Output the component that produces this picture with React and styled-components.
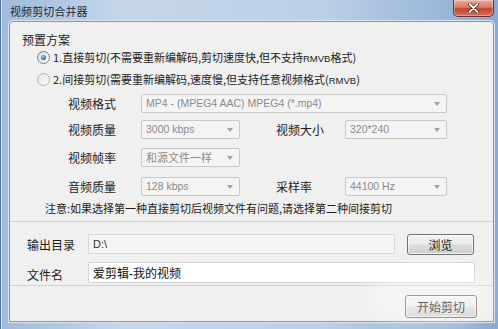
import React from "react";
import styled, { createGlobalStyle } from "styled-components";

const GlobalStyle = createGlobalStyle`
  html, body { margin: 0; padding: 0; }
  body {
    width: 498px;
    height: 329px;
    overflow: hidden;
    background: #fff;
    font-family: "Noto Sans CJK SC", "Noto Sans", sans-serif;
  }
`;

const Window = styled.div`
  position: relative;
  width: 498px;
  height: 329px;
  box-sizing: border-box;
  display: flex;
  flex-direction: column;
  background: linear-gradient(to right, #9fbadb 0%, #c6d7ea 25%, #bccfe6 65%, #8aabd4 100%);
  box-shadow: inset 1px 0 0 #4d74a6, inset 2px 0 0 #d9e6f4;
  overflow: hidden;
`;

const TitleBar = styled.div`
  height: 21px;
  display: flex;
  align-items: flex-start;
  justify-content: space-between;
  padding: 0 4px 0 10px;
`;

const Title = styled.span`
  margin-top: 3px;
  font-size: 11px;
  line-height: 16px;
  color: #1c2b3c;
  letter-spacing: 0.1px;
`;

const CloseButton = styled.div`
  width: 41px;
  height: 17px;
  box-sizing: border-box;
  display: flex;
  align-items: center;
  justify-content: center;
  border: 1px solid #6f3128;
  border-top: none;
  border-radius: 0 0 5px 5px;
  background: linear-gradient(to bottom, #e9a99c 0%, #d97a66 45%, #c2432c 55%, #d7705a 100%);
  box-shadow: inset 0 0 0 1px rgba(255, 255, 255, 0.35);
`;

const Body = styled.div`
  flex: 1;
  display: flex;
  padding: 0 4px 7px 9px;
`;

const Client = styled.div`
  flex: 1;
  display: flex;
  flex-direction: column;
  background: #f0f0f0;
  border: 1px solid #7e96b4;
  border-radius: 4px 4px 0 0;
  box-shadow: 0 0 0 1px #dbe6f2;
`;

const Section = styled.div`
  display: flex;
  flex-direction: column;
  padding: ${(p) => p.$pad};
  border-bottom: ${(p) => (p.$line ? "1px solid #d3d3d3" : "none")};
`;

const GroupTitle = styled.div`
  font-size: 12px;
  line-height: 14px;
  color: #1b1b1b;
`;

const RadioList = styled.div`
  display: flex;
  flex-direction: column;
  gap: 2px;
  margin-left: 15px;
`;

const RadioRow = styled.div`
  height: 20px;
  display: flex;
  align-items: center;
  gap: 3px;
  font-size: 11px;
  color: #1b1b1b;
  white-space: nowrap;
`;

const Radio = styled.span`
  position: relative;
  width: 13px;
  height: 13px;
  box-sizing: border-box;
  border-radius: 50%;
  border: 1px solid ${(p) => (p.$on ? "#7c7e80" : "#b4b6b8")};
  background: ${(p) =>
    p.$on
      ? "linear-gradient(135deg, #d9dbdd, #ffffff)"
      : "linear-gradient(135deg, #e4e5e6, #fbfbfb)"};
  flex: none;
  &::after {
    content: "";
    display: ${(p) => (p.$on ? "block" : "none")};
    position: absolute;
    left: 3px;
    top: 3px;
    width: 5px;
    height: 5px;
    border-radius: 50%;
    background: radial-gradient(circle at 40% 35%, #9fd0f4 0%, #2c6db0 60%, #1a4c84 100%);
  }
`;

const Small = styled.span`
  font-family: "Liberation Sans", sans-serif;
  font-size: 9.5px;
`;

const Settings = styled.div`
  display: flex;
  flex-direction: column;
  margin: 4px 0 0 46px;
`;

const SettingRow = styled.div`
  height: 20px;
  display: flex;
  align-items: center;
  margin-top: ${(p) => p.$top || 0}px;
`;

const Label = styled.span`
  width: ${(p) => p.$w}px;
  margin-left: ${(p) => p.$left || 0}px;
  flex: none;
  font-size: 12px;
  color: #1b1b1b;
  white-space: nowrap;
`;

const Combo = styled.div`
  position: relative;
  width: ${(p) => p.$w}px;
  height: 19px;
  box-sizing: border-box;
  flex: none;
  display: flex;
  align-items: center;
  padding-left: 4px;
  border: 1px solid #c8c8c8;
  border-radius: 2px;
  background: #f4f4f4;
  color: #8b8b8b;
  font-family: "Liberation Sans", "Noto Sans CJK SC", sans-serif;
  font-size: ${(p) => (p.$cjk ? 11 : 10.5)}px;
  white-space: nowrap;
  &::after {
    content: "";
    position: absolute;
    right: 6px;
    top: 7px;
    border-left: 3px solid transparent;
    border-right: 3px solid transparent;
    border-top: 4px solid #a2a2a2;
  }
`;

const Note = styled.div`
  margin: 4px 0 0 23px;
  font-size: 11px;
  line-height: 16px;
  color: #1b1b1b;
  white-space: nowrap;
`;

const FieldRow = styled.div`
  display: flex;
  align-items: center;
  height: ${(p) => p.$h}px;
  margin-top: ${(p) => p.$top || 0}px;
`;

const FieldLabel = styled.span`
  width: 61px;
  flex: none;
  font-size: 12px;
  color: #1b1b1b;
  padding-top: ${(p) => p.$drop || 0}px;
`;

const TextBox = styled.input`
  width: ${(p) => p.$w}px;
  height: 100%;
  box-sizing: border-box;
  margin: 0;
  padding: 0 0 0 4px;
  border: 1px solid #d6d6d6;
  border-radius: 1px;
  background: ${(p) => (p.$white ? "#ffffff" : "#f4f4f4")};
  color: ${(p) => (p.$white ? "#111" : "#333")};
  font-family: "Liberation Sans", "Noto Sans CJK SC", sans-serif;
  font-size: ${(p) => (p.$white ? 12 : 11)}px;
  outline: none;
`;

const Button = styled.div`
  width: ${(p) => p.$w}px;
  height: ${(p) => p.$h}px;
  box-sizing: border-box;
  margin-left: ${(p) => p.$left || 0}px;
  display: flex;
  align-items: center;
  justify-content: center;
  border: 1px solid #707070;
  border-radius: 3px;
  background: linear-gradient(to bottom, #f3f3f3 0%, #ebebeb 48%, #dddddd 52%, #cfcfcf 100%);
  box-shadow: inset 0 0 0 1px rgba(255, 255, 255, 0.7);
  font-size: 12px;
  color: #1b1b1b;
`;

const Footer = styled.div`
  flex: 1;
  display: flex;
  justify-content: flex-end;
  align-items: flex-start;
  padding: 9px 16px 0 0;
`;

const Watermark = styled.div`
  position: absolute;
  left: 370px;
  top: 266px;
  width: 120px;
  height: 60px;
  border-radius: 40%;
  background: rgba(255, 255, 255, 0.3);
  filter: blur(8px);
  pointer-events: none;
`;

export default function App() {
  return (
    <>
      <GlobalStyle />
      <Window>
        <TitleBar>
          <Title>视频剪切合并器</Title>
          <CloseButton>
            <svg width="11" height="10" viewBox="0 0 11 10">
              <path d="M1.5 1 L9.5 9 M9.5 1 L1.5 9" stroke="#3b1510" strokeWidth="3.2" strokeLinecap="round" />
              <path d="M1.5 1 L9.5 9 M9.5 1 L1.5 9" stroke="#ffffff" strokeWidth="1.8" strokeLinecap="round" />
            </svg>
          </CloseButton>
        </TitleBar>
        <Body>
          <Client>
            <Section $pad="11px 0 5px 12px" $line>
              <GroupTitle>预置方案</GroupTitle>
              <RadioList>
                <RadioRow>
                  <Radio $on />
                  <span>
                    1.直接剪切(不需要重新编解码,剪切速度快,但不支持<Small>RMVB</Small>格式)
                  </span>
                </RadioRow>
                <RadioRow>
                  <Radio />
                  <span>
                    2.间接剪切(需要重新编解码,速度慢,但支持任意视频格式(<Small>RMVB</Small>)
                  </span>
                </RadioRow>
              </RadioList>
              <Settings>
                <SettingRow>
                  <Label $w={73}>视频格式</Label>
                  <Combo $w={306}>MP4 - (MPEG4 AAC) MPEG4 (*.mp4)</Combo>
                </SettingRow>
                <SettingRow $top={6}>
                  <Label $w={73}>视频质量</Label>
                  <Combo $w={99}>3000 kbps</Combo>
                  <Label $w={69} $left={36}>视频大小</Label>
                  <Combo $w={102}>320*240</Combo>
                </SettingRow>
                <SettingRow $top={8}>
                  <Label $w={73}>视频帧率</Label>
                  <Combo $w={99} $cjk>和源文件一样</Combo>
                </SettingRow>
                <SettingRow $top={9}>
                  <Label $w={73}>音频质量</Label>
                  <Combo $w={99}>128 kbps</Combo>
                  <Label $w={69} $left={36}>采样率</Label>
                  <Combo $w={102}>44100 Hz</Combo>
                </SettingRow>
              </Settings>
              <Note>注意:如果选择第一种直接剪切后视频文件有问题,请选择第二种间接剪切</Note>
            </Section>
            <Section $pad="12px 0 2px 17px" $line>
              <FieldRow $h={20}>
                <FieldLabel>输出目录</FieldLabel>
                <TextBox $w={307} readOnly value="D:\" />
                <Button $w={67} $h={21} $left={12}>浏览</Button>
              </FieldRow>
              <FieldRow $h={21} $top={8}>
                <FieldLabel $drop={3}>文件名</FieldLabel>
                <TextBox $w={387} $white readOnly value="爱剪辑-我的视频" />
              </FieldRow>
            </Section>
            <Footer>
              <Button $w={72} $h={23}>开始剪切</Button>
            </Footer>
          </Client>
        </Body>
        <Watermark />
      </Window>
    </>
  );
}
